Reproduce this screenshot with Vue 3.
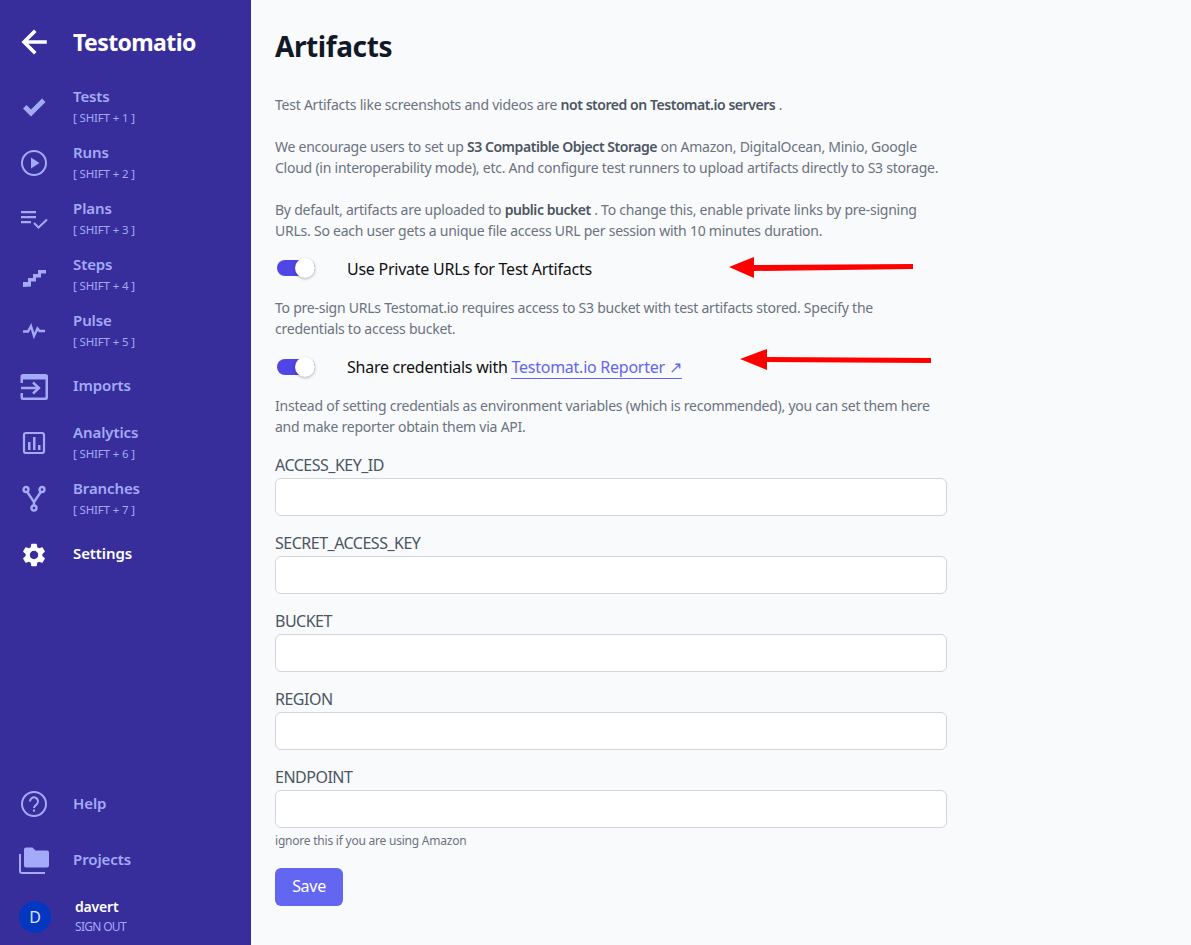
<template>
  <div class="page">
    <aside class="sidebar">
      <div class="brand">
        <svg class="icon" viewBox="0 0 28 28" fill="none" stroke="#fff" stroke-width="3.6" stroke-linecap="square">
          <path d="M25 14H5M14 4 4 14l10 10" />
        </svg>
        <span class="brand-name">Testomatio</span>
      </div>

      <nav class="nav">
        <a v-for="item in mainNav" :key="item.label" class="nav-item" :class="{ active: item.active, single: !item.shortcut }">
          <svg class="icon" viewBox="0 0 28 28" v-html="item.icon"></svg>
          <span class="nav-text">
            <span class="nav-label">{{ item.label }}</span>
            <span v-if="item.shortcut" class="nav-shortcut">[ SHIFT + {{ item.shortcut }} ]</span>
          </span>
        </a>
      </nav>

      <nav class="nav nav-bottom">
        <a v-for="item in bottomNav" :key="item.label" class="nav-item">
          <svg class="icon" viewBox="0 0 28 28" v-html="item.icon"></svg>
          <span class="nav-text">
            <span class="nav-label">{{ item.label }}</span>
          </span>
        </a>
      </nav>

      <div class="user">
        <div class="avatar">D</div>
        <div class="user-text">
          <div class="user-name">davert</div>
          <div class="sign-out">SIGN OUT</div>
        </div>
      </div>
    </aside>

    <main class="main">
      <h1>Artifacts</h1>
      <p>Test Artifacts like screenshots and videos are <b>not stored on Testomat.io servers</b> .</p>
      <p>We encourage users to set up <b>S3 Compatible Object Storage</b> on Amazon, DigitalOcean, Minio, Google<br />Cloud (in interoperability mode), etc. And configure test runners to upload artifacts directly to S3 storage.</p>
      <p>By default, artifacts are uploaded to <b>public bucket</b> . To change this, enable private links by pre-signing<br />URLs. So each user gets a unique file access URL per session with 10 minutes duration.</p>

      <div class="toggle-row first">
        <span class="toggle"><span class="knob"></span></span>
        <span class="toggle-label">Use Private URLs for Test Artifacts</span>
        <svg class="arrow arrow-one" width="186" height="22" viewBox="0 0 186 22">
          <path d="M0 11 25 1v8l159-1v5L25 15v7z" fill="#f00" />
        </svg>
      </div>
      <p class="after-toggle">To pre-sign URLs Testomat.io requires access to S3 bucket with test artifacts stored. Specify the<br />credentials to access bucket.</p>

      <div class="toggle-row second">
        <span class="toggle"><span class="knob"></span></span>
        <span class="toggle-label">Share credentials with <a class="link">Testomat.io Reporter ↗</a></span>
        <svg class="arrow arrow-two" width="192" height="22" viewBox="0 0 192 22">
          <path d="M0 11 27 1v8l164 1v5L27 14v8z" fill="#f00" />
        </svg>
      </div>
      <p class="after-toggle tight">Instead of setting credentials as environment variables (which is recommended), you can set them here<br />and make reporter obtain them via API.</p>

      <form class="form" @submit.prevent>
        <div v-for="field in fields" :key="field" class="field">
          <label>{{ field }}</label>
          <input type="text" />
        </div>
        <div class="hint">ignore this if you are using Amazon</div>
        <button class="save" type="button">Save</button>
      </form>
    </main>
  </div>
</template>

<script setup>
const stroke = 'fill="none" stroke="currentColor" stroke-width="2"'
const thick = 'fill="none" stroke="currentColor" stroke-width="2.4"'

const mainNav = [
  {
    label: 'Tests',
    shortcut: 1,
    icon: '<path d="M3 15.500 6.500 12l4.500 4.500L22 5.500 25.500 9 11 23.500z" fill="currentColor"/>'
  },
  {
    label: 'Runs',
    shortcut: 2,
    icon: `<circle cx="14" cy="14" r="12" ${stroke}/><path d="M11 8.500 19.500 14 11 19.500z" fill="currentColor"/>`
  },
  {
    label: 'Plans',
    shortcut: 3,
    icon: `<path d="M1 6h15v2.200H1zM1 11h15v2.200H1zM1 16h10v2.200H1z" fill="currentColor"/><path d="m14 18 4.500 4.500L27 14.500" ${stroke}/>`
  },
  {
    label: 'Steps',
    shortcut: 4,
    icon: '<path d="M3 26v-5h5v-4h5v-4h5V9h8v3.500h-5v4h-5v4h-5v5z" fill="currentColor"/>'
  },
  {
    label: 'Pulse',
    shortcut: 5,
    icon: `<path d="M3 14.500h5L11 9l3 10 3.500-7.500 2 2.500H25" ${thick}/>`
  },
  {
    label: 'Imports',
    icon: '<path d="M3 1h22.500A2.500 2.500 0 0 1 28 3.500v21a2.500 2.500 0 0 1-2.500 2.500H3A2.500 2.500 0 0 1 .5 24.500V20H3v4.500h22.500V6.500H3V10H.5V3.500A2.500 2.500 0 0 1 3 1z" fill="currentColor"/><path d="M1 15h17M13 9.500l6 5.500-6 5.500" fill="none" stroke="currentColor" stroke-width="2.400"/>'
  },
  {
    label: 'Analytics',
    shortcut: 6,
    icon: '<rect x="4" y="4" width="20" height="20" rx="2" fill="none" stroke="currentColor" stroke-width="2.200"/><path d="M8 13h2.500v8H8zM13 8h2.500v13H13zM18 16h2.500v5H18z" fill="currentColor"/>'
  },
  {
    label: 'Branches',
    shortcut: 7,
    icon: `<circle cx="6" cy="4.500" r="2.500" ${thick}/><circle cx="22" cy="4.500" r="2.500" ${thick}/><circle cx="14" cy="23" r="2.500" ${thick}/><path d="M7.200 7 14 17v3.500M20.800 7 14 17" ${thick}/>`
  },
  {
    label: 'Settings',
    active: true,
    icon: '<path transform="scale(1.167)" fill="currentColor" fill-rule="evenodd" d="M19.140 12.940c.04-.3.06-.61.06-.94 0-.32-.02-.64-.07-.94l2.030-1.580c.18-.14.23-.41.12-.61l-1.920-3.320c-.12-.22-.37-.29-.59-.22l-2.390.96c-.5-.38-1.030-.7-1.620-.94l-.36-2.540c-.04-.24-.24-.41-.48-.41h-3.840c-.24 0-.43.17-.47.41l-.36 2.540c-.59.24-1.130.57-1.620.94l-2.390-.96c-.22-.08-.47 0-.59.22L2.740 8.870c-.12.21-.08.47.12.61l2.030 1.580c-.05.3-.09.63-.09.94s.02.64.07.94l-2.030 1.580c-.18.14-.23.41-.12.61l1.920 3.320c.12.22.37.29.59.22l2.390-.96c.5.38 1.030.7 1.620.94l.36 2.540c.05.24.24.41.48.41h3.840c.24 0 .44-.17.47-.41l.36-2.540c.59-.24 1.130-.56 1.620-.94l2.390.96c.22.08.47 0 .59-.22l1.920-3.320c.12-.22.07-.47-.12-.61l-2.010-1.580zM12 15.600c-1.980 0-3.600-1.620-3.600-3.600s1.620-3.600 3.600-3.600 3.600 1.620 3.600 3.600-1.620 3.600-3.600 3.600z"/>'
  }
]

const bottomNav = [
  {
    label: 'Help',
    icon: `<circle cx="14" cy="14" r="12" ${stroke}/><path d="M10 11.500a4 4 0 1 1 6.500 3c-1.500 1.200-2.500 1.800-2.500 3.500" ${stroke}/><rect x="13" y="19.500" width="2" height="2.200" fill="currentColor"/>`
  },
  {
    label: 'Projects',
    icon: '<path d="M4 3.500a2 2 0 0 1 2-2h6.500l3 3H27a2 2 0 0 1 2 2v13a2 2 0 0 1-2 2H6a2 2 0 0 1-2-2z" fill="currentColor"/><path d="M0 8v17a2 2 0 0 0 2 2h23" fill="none" stroke="currentColor" stroke-width="2"/>'
  }
]

const fields = ['ACCESS_KEY_ID', 'SECRET_ACCESS_KEY', 'BUCKET', 'REGION', 'ENDPOINT']
</script>

<style>
html,
body {
  margin: 0;
  background: #f9fafb;
}
</style>

<style scoped>
.page {
  display: flex;
  height: 945px;
  overflow: hidden;
  font-family: "Noto Sans", "Open Sans", sans-serif;
  background: #f9fafb;
}

.sidebar {
  width: 251px;
  flex-shrink: 0;
  display: flex;
  flex-direction: column;
  background: #372e9c;
  color: #a3aaf8;
}

.brand {
  height: 79px;
  padding: 5px 0 0 20px;
  box-sizing: border-box;
  display: flex;
  align-items: center;
  gap: 25px;
}

.brand-name {
  font-size: 23px;
  font-weight: 700;
  color: #fff;
  letter-spacing: -0.6px;
}

.icon {
  width: 28px;
  height: 28px;
  flex-shrink: 0;
  overflow: visible;
}

.nav-item {
  height: 56px;
  padding-left: 20px;
  display: flex;
  align-items: center;
  gap: 25px;
}

.nav-item.active {
  color: #fff;
}

.nav-text {
  display: flex;
  flex-direction: column;
  margin-bottom: 2px;
}

.nav-item.single .nav-text {
  margin-bottom: 4px;
}

.nav-label {
  font-size: 15px;
  font-weight: 600;
  line-height: 21px;
  letter-spacing: -0.1px;
}

.nav-shortcut {
  font-size: 11.500px;
  line-height: 17px;
  margin-top: 2px;
  letter-spacing: -0.15px;
}

.nav-bottom {
  margin-top: auto;
}

.user {
  height: 57px;
  padding-left: 19px;
  display: flex;
  align-items: center;
  gap: 24px;
}

.avatar {
  width: 32px;
  height: 32px;
  margin-top: 1px;
  border-radius: 50%;
  background: #0337bf;
  color: #dbe4ff;
  font-size: 16px;
  line-height: 32px;
  text-align: center;
}

.user-text {
  margin-top: 1px;
}

.user-name {
  font-size: 14px;
  font-weight: 600;
  line-height: 20px;
  color: #fff;
  letter-spacing: -0.2px;
}

.sign-out {
  font-size: 12px;
  line-height: 20px;
  letter-spacing: -0.7px;
}

.main {
  flex: 1;
  padding: 0 24px;
  color: #6b7280;
}

h1 {
  margin: 0;
  padding-top: 26px;
  font-size: 28px;
  line-height: 40px;
  font-weight: 700;
  color: #111827;
  letter-spacing: -0.4px;
}

p {
  margin: 0;
  width: 680px;
  font-size: 14px;
  line-height: 21px;
  letter-spacing: -0.24px;
  white-space: nowrap;
}

h1 + p {
  margin-top: 28px;
}

p + p {
  margin-top: 21px;
}

b {
  font-weight: 600;
  color: #4b5563;
  letter-spacing: -0.45px;
}

.toggle-row {
  position: relative;
  display: flex;
  align-items: center;
  gap: 32px;
  height: 24px;
  padding-left: 2px;
  color: #111;
}

.toggle-row.first {
  margin-top: 15px;
}

.toggle-row.second {
  margin-top: 16px;
}

.toggle-row + .after-toggle {
  margin-top: 17px;
}

.toggle-row + .after-toggle.tight {
  margin-top: 16px;
}

.toggle {
  position: relative;
  width: 38px;
  height: 16px;
  border-radius: 8px;
  background: #4f46e5;
}

.knob {
  position: absolute;
  right: 0;
  top: -2px;
  width: 20px;
  height: 20px;
  border-radius: 50%;
  background: #fff;
  box-shadow: 0 1px 3px rgba(0, 0, 0, 0.3);
}

.toggle-label {
  font-size: 16px;
  letter-spacing: -0.25px;
}

.first .toggle-label {
  margin-top: 2px;
}

.link {
  color: #6366f1;
  border-bottom: 1px solid #6366f1;
}

.arrow {
  position: absolute;
}

.arrow-one {
  left: 454px;
  top: 0;
}

.arrow-two {
  left: 465px;
  top: -7px;
}

.form {
  margin-top: 19px;
  width: 672px;
}

.field {
  height: 78px;
}

.field label {
  display: block;
  height: 22px;
  font-size: 16px;
  line-height: 18px;
  color: #4b5563;
  letter-spacing: -0.5px;
}

.field input {
  display: block;
  width: 100%;
  height: 38px;
  box-sizing: border-box;
  border: 1px solid #d1d5db;
  border-radius: 6px;
  background: #fff;
}

.hint {
  margin-top: -13px;
  font-size: 12px;
  line-height: 16px;
  letter-spacing: -0.22px;
}

.save {
  display: block;
  width: 68px;
  height: 38px;
  margin-top: 19px;
  padding: 0 0 2px;
  border: 0;
  border-radius: 6px;
  background: #6366f1;
  color: #fff;
  font-family: inherit;
  font-size: 16px;
  letter-spacing: -0.3px;
}
</style>
